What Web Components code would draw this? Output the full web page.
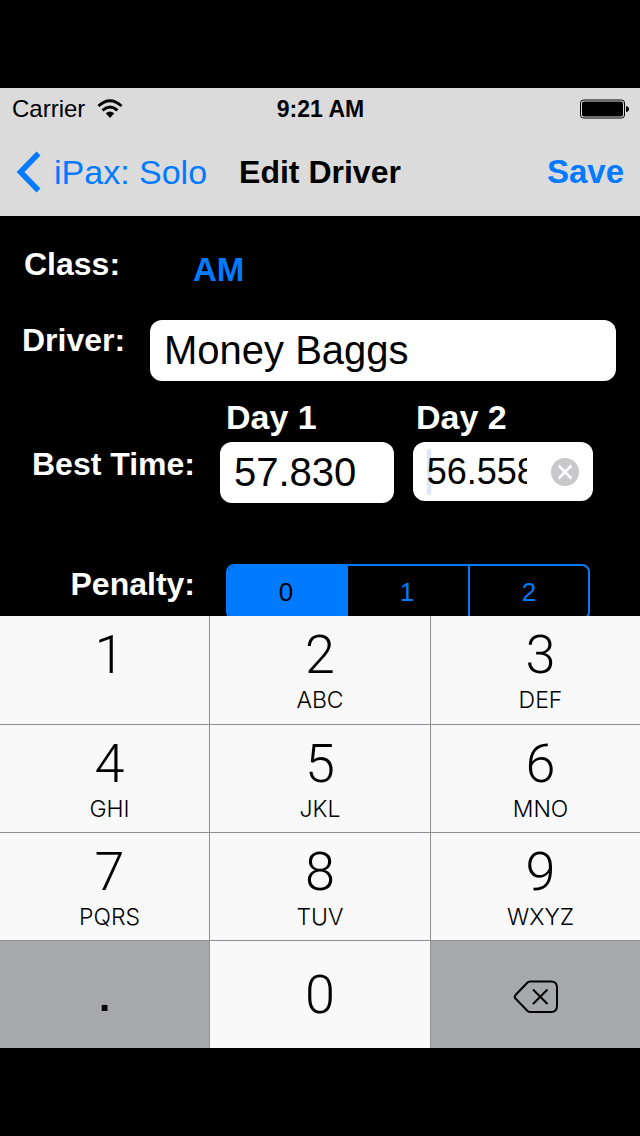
<!DOCTYPE html>
<html lang="en">
<head>
<meta charset="utf-8">
<meta name="viewport" content="width=device-width, initial-scale=1">
<title>Edit Driver</title>
<style>
  html { background: #000; }
  body {
    margin: 0;
    min-height: 100vh;
    display: flex;
    flex-direction: column;
    justify-content: center;
    background: #000;
    color: #000;
    font-family: "Liberation Sans", Arial, sans-serif;
  }
</style>
</head>
<body>
<status-bar carrier="Carrier">9:21 AM</status-bar>
<nav-bar>
  <span slot="back">iPax: Solo</span>
  Edit Driver
  <span slot="action">Save</span>
</nav-bar>
<driver-form></driver-form>
<number-pad>
  <pad-key side>1</pad-key>
  <pad-key letters="ABC">2</pad-key>
  <pad-key side letters="DEF">3</pad-key>
  <pad-key side letters="GHI">4</pad-key>
  <pad-key letters="JKL">5</pad-key>
  <pad-key side letters="MNO">6</pad-key>
  <pad-key side letters="PQRS">7</pad-key>
  <pad-key letters="TUV">8</pad-key>
  <pad-key side letters="WXYZ">9</pad-key>
  <pad-key dark>.</pad-key>
  <pad-key plain>0</pad-key>
  <pad-key dark label="Delete">
    <svg width="46" height="34" viewBox="0 0 46 34" fill="none" stroke="#000" stroke-width="2" stroke-linejoin="round" style="display:block">
      <path d="M17 1.500H38Q44 1.500 44 7.500V26Q44 32 38 32H17Q15.500 32 14.300 30.800L2.500 18.500Q1 17 2.500 15L14.300 2.700Q15.500 1.500 17 1.500Z"/>
      <path d="M20 9.500L34.500 24M34.500 9.500L20 24"/>
    </svg>
  </pad-key>
</number-pad>

<script>
class ShadowElement extends HTMLElement {
  constructor() {
    super();
    this.attachShadow({ mode: 'open' });
  }
  connectedCallback() {
    this.shadowRoot.innerHTML = this.render();
  }
}

customElements.define('status-bar', class extends ShadowElement {
  render() {
    return `
      <style>
        :host { display: grid; grid-template-columns: 1fr auto 1fr; align-items: center; height: 40px; padding: 0 11px 0 12px; background: #dbdbdb; font-size: 24px; line-height: 42px; }
        .left { display: flex; align-items: center; gap: 12px; }
        .time { font-weight: bold; font-size: 23px; }
        svg { display: block; }
        .battery { justify-self: end; }
      </style>
      <span class="left"><span>${this.getAttribute('carrier')}</span>
        <svg width="26" height="20" viewBox="0 0 26 20" fill="none" stroke="#000" stroke-width="3">
          <path d="M1.500 7Q13-3.500 24.500 7"/>
          <path d="M5.500 11.300Q13 4.800 20.500 11.300"/>
          <path d="M8.700 14.300Q13 10.500 17.300 14.300L13 19Z" fill="#000" stroke="none"/>
        </svg>
      </span>
      <span class="time"><slot></slot></span>
      <svg class="battery" width="49" height="20" viewBox="0 0 49 20">
        <rect x=".5" y="1" width="44" height="18" rx="3" fill="none" stroke="#000"/>
        <rect x="2" y="2.500" width="41" height="15" rx="2"/>
        <path d="M46 7Q49 7.500 49 10T46 13Z"/>
      </svg>`;
  }
});

customElements.define('nav-bar', class extends ShadowElement {
  render() {
    return `
      <style>
        :host { display: grid; grid-template-columns: 1fr auto 1fr; align-items: center; height: 88px; padding: 0 16px; background: #dbdbdb; }
        a { display: flex; align-items: center; gap: 12px; color: #007aff; font-size: 34px; text-decoration: none; }
        svg { display: block; }
        h1 { margin: 0; font-size: 32px; }
        button { justify-self: end; border: 0; padding: 0; background: none; color: #007aff; font: bold 33px "Liberation Sans", Arial, sans-serif; }
      </style>
      <a href="#back">
        <svg width="26" height="42" viewBox="0 0 26 42" fill="none" stroke="#007aff" stroke-width="5.500"><path d="M22.500 2.500L4.500 21L22.500 39.500"/></svg>
        <slot name="back"></slot>
      </a>
      <h1><slot></slot></h1>
      <button type="button"><slot name="action"></slot></button>`;
  }
});

customElements.define('segmented-control', class extends ShadowElement {
  render() {
    const items = this.getAttribute('options').split(',');
    return `
      <style>
        :host { display: block; }
        .group { display: grid; grid-auto-flow: column; grid-auto-columns: 1fr; box-sizing: border-box; height: 56px; border: 2px solid #007aff; border-radius: 8px; overflow: hidden; color: #007aff; font-size: 26px; }
        label { display: grid; place-items: center; }
        label + label { border-left: 2px solid #007aff; }
        label:not(:last-child) { padding-right: 4px; }
        label:has(:checked) { background: #007aff; color: #000; }
        label:has(:checked) + label { border-color: transparent; }
        input { appearance: none; position: absolute; margin: 0; width: 0; height: 0; }
      </style>
      <div class="group" role="radiogroup" aria-label="${this.getAttribute('label')}">
        ${items.map((t, i) => `<label><input type="radio" name="segment" value="${t}"${i ? '' : ' checked'}><span>${t}</span></label>`).join('')}
      </div>`;
  }
});

customElements.define('driver-form', class extends ShadowElement {
  render() {
    return `
      <style>
        :host { display: block; padding-top: 28px; color: #fff; font-weight: bold; font-size: 32px; line-height: 40px; }
        .row { display: flex; align-items: flex-start; }
        .row > label, .row > .label { flex: none; box-sizing: border-box; }
        .near { width: 150px; padding-left: 22px; }
        .far { width: 195px; text-align: right; }
        .class { padding-bottom: 30px; }
        .class .near { padding-left: 24px; }
        .class button { margin: 6px 0 0 43px; border: 0; padding: 0; background: none; color: #007aff; font: inherit; font-size: 33px; }
        .driver { padding-right: 24px; }
        .field { display: flex; align-items: center; box-sizing: border-box; height: 61px; padding: 0 14px; border-radius: 12px; background: #fff; }
        .field input { min-width: 0; width: 100%; height: 46px; border: 0; padding: 0; outline: 0; background: none; color: #000; font: 40px "Liberation Sans", Arial, sans-serif; }
        .driver .field { flex: 1; }
        .days { padding: 16px 0 5px 226px; font-size: 34px; }
        .days label { width: 190px; }
        .times { padding: 0 47px 61px 0; }
        .times > label { padding-top: 2px; }
        .one { flex: 173; margin-left: 25px; }
        .two { flex: 181; height: 59px; margin-left: 19px; justify-content: space-between; }
        .two input { width: 100px; font-size: 36px; background: linear-gradient(#dde6fd, #dde6fd) 0 0 / 4px 46px no-repeat; }
        .two button { flex: none; border: 0; padding: 0; background: none; }
        .two svg { display: block; }
        .penalty { padding-right: 50px; }
        segmented-control { flex: 1; margin-left: 31px; font-weight: normal; }
      </style>
      <div class="row class"><span class="label near">Class:</span><button type="button">AM</button></div>
      <div class="row driver">
        <label class="near" for="driver">Driver:</label>
        <div class="field"><input id="driver" type="text" value="Money Baggs"></div>
      </div>
      <div class="row days"><label for="day1">Day 1</label><label for="day2">Day 2</label></div>
      <div class="row times">
        <label class="far" for="day1">Best Time:</label>
        <div class="field one"><input id="day1" type="text" inputmode="decimal" value="57.830"></div>
        <div class="field two">
          <input id="day2" type="text" inputmode="decimal" value="56.558">
          <button type="button" aria-label="Clear">
            <svg width="28" height="28" viewBox="0 0 28 28"><circle cx="14" cy="14" r="14" fill="#c8c8cb"/><path d="M7.500 7.500L20.500 20.500M20.500 7.500L7.500 20.500" stroke="#fff" stroke-width="2.500"/></svg>
          </button>
        </div>
      </div>
      <div class="row penalty">
        <span class="label far">Penalty:</span>
        <segmented-control label="Penalty" options="0,1,2"></segmented-control>
      </div>`;
  }
});

customElements.define('pad-key', class extends ShadowElement {
  render() {
    const letters = this.getAttribute('letters');
    const label = this.getAttribute('label');
    return `
      <style>
        :host { display: grid; background: #f9f9f9; }
        :host([dark]) { background: #a6a8ac; }
        button { display: flex; flex-direction: column; align-items: center; border: 0; padding: 8px 0 0; background: none; color: #000; font: 300 54px Roboto, "Liberation Sans", sans-serif; line-height: 62px; }
        :host([side]) button { padding-left: 10px; }
        :host([plain]) button, :host([dark]) button { padding-top: 0; justify-content: center; }
        :host([dark]) button { padding: 4px 0 0; font: bold 40px "Liberation Sans", Arial, sans-serif; line-height: 36px; }
        small { font: 300 23px Inter, "Liberation Sans", sans-serif; line-height: 28px; }
      </style>
      <button type="button"${label ? ` aria-label="${label}"` : ''}><slot></slot>${letters ? `<small>${letters}</small>` : ''}</button>`;
  }
});

customElements.define('number-pad', class extends ShadowElement {
  render() {
    return `
      <style>
        /* The pad slides over the lower edge of the form. */
        :host { display: grid; position: relative; margin-top: -4px; grid-template: 108px / 209fr 220fr 209fr; grid-auto-rows: 107px; gap: 1px; background: #8e8e93; }
      </style>
      <slot></slot>`;
  }
});
</script>
</body>
</html>
